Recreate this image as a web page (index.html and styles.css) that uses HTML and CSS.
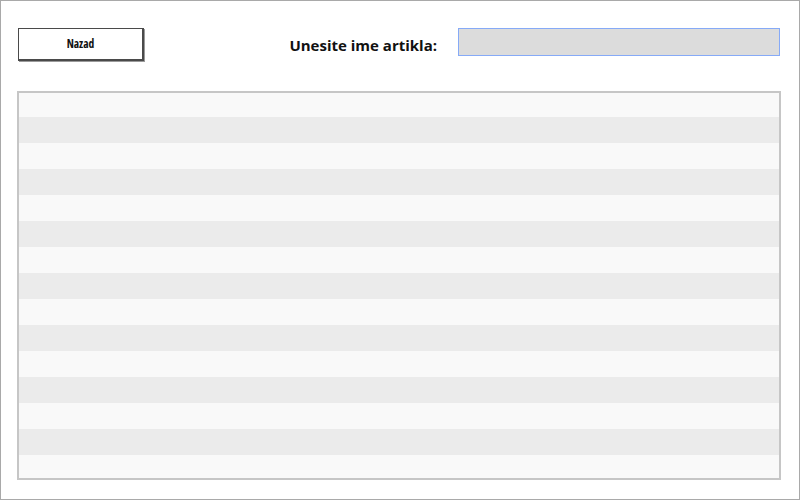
FILE: index.html
```html
<!DOCTYPE html>
<html>
<head>
<meta charset="utf-8">
<link rel="stylesheet" href="styles.css">
</head>
<body>
<div class="page">
  <div class="header">
    <button class="back">Nazad</button>
    <div class="search">
      <label class="label" for="q">Unesite ime artikla:</label>
      <input class="field" id="q" type="text">
    </div>
  </div>
  <div class="table">
    <div class="row light first"></div>
    <div class="row dark"></div>
    <div class="row light"></div>
    <div class="row dark"></div>
    <div class="row light"></div>
    <div class="row dark"></div>
    <div class="row light"></div>
    <div class="row dark"></div>
    <div class="row light"></div>
    <div class="row dark"></div>
    <div class="row light"></div>
    <div class="row dark"></div>
    <div class="row light"></div>
    <div class="row dark"></div>
    <div class="row light last"></div>
  </div>
</div>
</body>
</html>
```
FILE: styles.css
```css
html, body {
  margin: 0;
  padding: 0;
  background: #ffffff;
}

.page {
  box-sizing: border-box;
  width: 800px;
  height: 500px;
  border: 1px solid #a9a9a9;
  padding: 27px 18px 0 16px;
  display: flex;
  flex-direction: column;
  font-family: "Open Sans", "Liberation Sans", sans-serif;
}

.header {
  display: flex;
  align-items: flex-start;
  justify-content: space-between;
  height: 33px;
}

.back {
  box-sizing: border-box;
  margin: 0 0 0 1px;
  width: 126px;
  height: 33px;
  padding: 0 0 1px 0;
  background: #ffffff;
  border: 1px solid #4a4a4a;
  border-right-width: 2px;
  border-bottom-width: 2px;
  box-shadow: 1px 1px 0 #9a9a9a;
  font-family: inherit;
  font-stretch: 85%;
  font-weight: bold;
  font-size: 11.5px;
  color: #111111;
}

.search {
  display: flex;
  align-items: center;
  gap: 21px;
  margin-right: 1px;
}

.label {
  padding-top: 5px;
  font-weight: bold;
  font-size: 15px;
  color: #111111;
  letter-spacing: 0;
}

.field {
  box-sizing: border-box;
  width: 322px;
  height: 28px;
  margin: 0;
  border: 1px solid #86aaf7;
  background: #dcdcdc;
  outline: none;
}

.table {
  box-sizing: border-box;
  margin-top: 30px;
  height: 389px;
  border: 2px solid #c6c6c6;
  display: flex;
  flex-direction: column;
  overflow: hidden;
}

.row {
  height: 26px;
  flex: none;
}

.row.first {
  height: 24px;
}

.row.last {
  height: 23px;
}

.light {
  background: #f9f9f9;
}

.dark {
  background: #ebebeb;
}
```
